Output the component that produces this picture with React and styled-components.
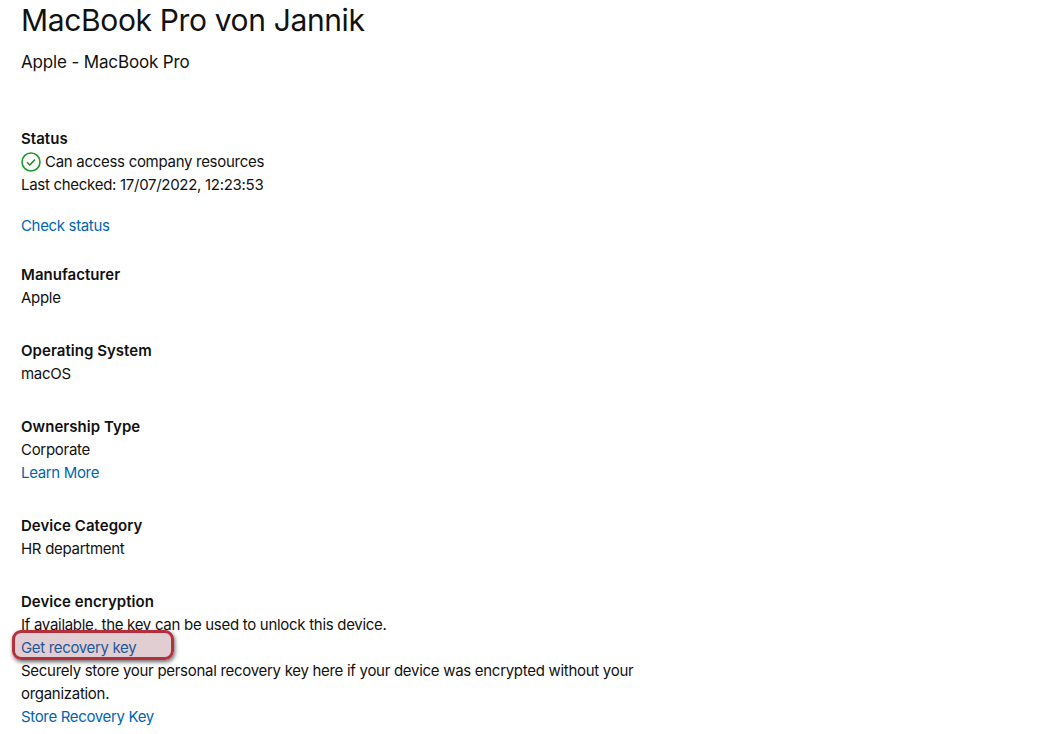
import React from "react";
import styled, { createGlobalStyle } from "styled-components";

const GlobalStyle = createGlobalStyle`
  html, body {
    margin: 0;
    background: #fff;
  }
  body {
    font-family: "Inter", "Liberation Sans", sans-serif;
    color: #111;
  }
`;

function App() {
  return (
    <Root>
      <GlobalStyle />
      <Title>MacBook Pro von Jannik</Title>
      <Subtitle>Apple - MacBook Pro</Subtitle>

      <FirstSection>
        <Label>Status</Label>
        <StatusRow>
          <svg width="20" height="20" viewBox="0 0 20 20" fill="none">
            <circle cx="10" cy="10" r="9" stroke="#1c9a2a" strokeWidth="1.6" />
            <path d="M6 10.3l2.8 2.6L14 7.4" stroke="#1c7f2a" strokeWidth="1.4" />
          </svg>
          Can access company resources
        </StatusRow>
        <Line>Last checked: 17/07/2022, 12:23:53</Line>
        <StatusLink href="#">Check status</StatusLink>
      </FirstSection>

      <Section>
        <Label>Manufacturer</Label>
        <Line>Apple</Line>
      </Section>

      <Section>
        <Label>Operating System</Label>
        <Line>macOS</Line>
      </Section>

      <Section>
        <Label>Ownership Type</Label>
        <Line>Corporate</Line>
        <TextLink href="#">Learn More</TextLink>
      </Section>

      <Section>
        <Label>Device Category</Label>
        <Line>HR department</Line>
      </Section>

      <Section>
        <Label>Device encryption</Label>
        <Line>If available, the key can be used to unlock this device.</Line>
        <HighlightWrap>
          <TextLink href="#">Get recovery key</TextLink>
          <Highlight />
        </HighlightWrap>
        <Line>Securely store your personal recovery key here if your device was encrypted without your organization.</Line>
        <TextLink href="#">Store Recovery Key</TextLink>
      </Section>
    </Root>
  );
}

const Root = styled.div`
  width: 1057px;
  height: 734px;
  padding: 0 21px;
  box-sizing: border-box;
  overflow: hidden;
  font-size: 15px;
  letter-spacing: -0.29px;
  line-height: 23px;
`;

const Title = styled.h1`
  margin: 0;
  font-size: 30px;
  font-weight: 400;
  letter-spacing: -0.36px;
  line-height: 41px;
`;

const Subtitle = styled.div`
  margin-top: 9px;
  font-size: 17px;
  letter-spacing: -0.15px;
  line-height: 24px;
`;

const Section = styled.section`
  max-width: 640px;
  margin-top: 30px;
`;

const FirstSection = styled(Section)`
  margin-top: 53px;
  margin-bottom: -4px;
`;

const Label = styled.div`
  font-weight: 600;
  letter-spacing: 0.04px;
`;

const Line = styled.div``;

const StatusRow = styled.div`
  display: flex;
  align-items: center;
  gap: 4px;
`;

const TextLink = styled.a`
  display: block;
  color: #0065b3;
  letter-spacing: -0.34px;
  text-decoration: none;
`;

const StatusLink = styled(TextLink)`
  margin-top: 18px;
`;

const HighlightWrap = styled.div`
  position: relative;
`;

const Highlight = styled.div`
  position: absolute;
  left: -9px;
  top: -6px;
  width: 162px;
  height: 30px;
  border: 3px solid #b5303c;
  border-radius: 9px;
  background: rgba(130, 50, 65, 0.24);
  box-shadow: 1px 2px 4px rgba(0, 0, 0, 0.6);
  box-sizing: border-box;
`;

export default App;
